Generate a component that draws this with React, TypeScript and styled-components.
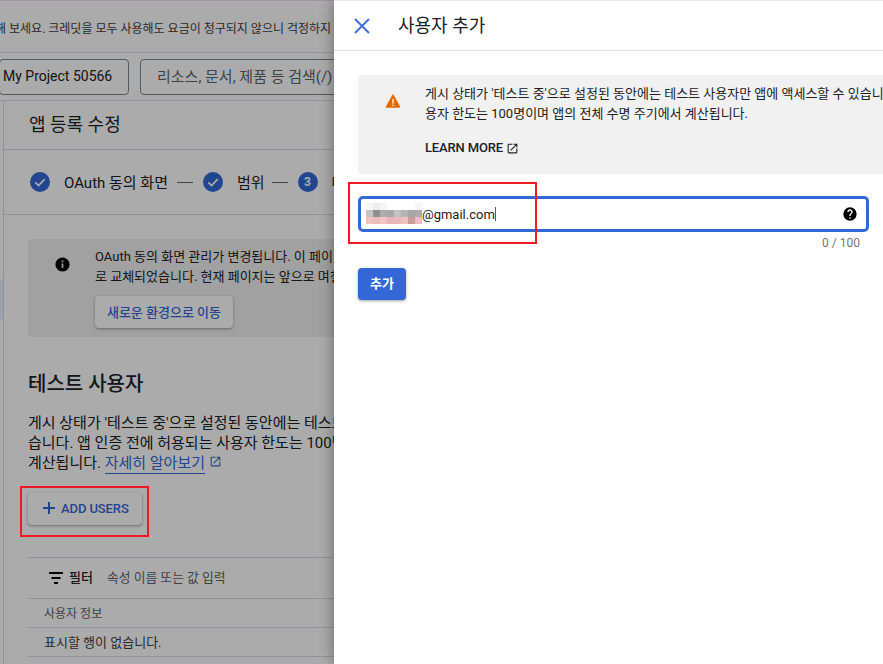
import React from "react";
import styled, { createGlobalStyle } from "styled-components";

const Global = createGlobalStyle`
  html, body { margin: 0; padding: 0; background: #fff; }
  * { box-sizing: border-box; }
  body { font-family: Roboto, "Noto Sans CJK KR", sans-serif; color: #202124; }
`;

const Screen = styled.div`
  position: relative;
  width: 883px;
  height: 664px;
  overflow: hidden;
  background: #fff;
`;

const Console = styled.div`
  width: 883px;
  height: 664px;
  padding-top: 2px;
  border-top: 1px solid #efe3f0;
  display: flex;
  flex-direction: column;
`;

const Banner = styled.div`
  height: 50px;
  flex: none;
  border-bottom: 1px solid #dadce0;
  display: flex;
  align-items: center;
  overflow: hidden;
`;

const BannerText = styled.span`
  margin-left: -5px;
  padding-bottom: 1px;
  font-size: 12px;
  white-space: nowrap;
  color: #3c4043;
`;

const TopBar = styled.div`
  height: 48px;
  flex: none;
  border-bottom: 1px solid #dadce0;
  display: flex;
  align-items: center;
  gap: 11px;
`;

const ProjectChip = styled.div`
  width: 130px;
  height: 36px;
  flex: none;
  margin-left: -1px;
  padding: 0 0 2px 3px;
  border: 1px solid #80868b;
  border-radius: 4px;
  display: flex;
  align-items: center;
  font-size: 14px;
  white-space: nowrap;
`;

const SearchChip = styled.div`
  width: 400px;
  height: 36px;
  flex: none;
  padding: 0 0 2px 16px;
  border: 1px solid #80868b;
  border-radius: 4px;
  display: flex;
  align-items: center;
  font-size: 15px;
  white-space: nowrap;
  color: #5f6368;
`;

const Body = styled.div`
  flex: 1;
  display: flex;
  min-height: 0;
`;

const Nav = styled.div`
  width: 4px;
  flex: none;
  border-right: 1px solid #dadce0;
  padding-top: 178px;
`;

const NavActive = styled.div`
  width: 3px;
  height: 40px;
  background: #e8f0fe;
`;

const Main = styled.main`
  flex: 1;
  min-width: 0;
  display: flex;
  flex-direction: column;
`;

const TitleRow = styled.div`
  height: 49px;
  flex: none;
  border-bottom: 1px solid #dadce0;
  display: flex;
  align-items: center;
  padding: 0 0 4px 25px;
  font-size: 18px;
  font-weight: 400;
`;

const Stepper = styled.div`
  height: 65px;
  flex: none;
  border-bottom: 1px solid #dadce0;
  display: flex;
  align-items: center;
  padding-left: 26px;
  font-size: 15px;
  white-space: nowrap;
`;

const StepDot = styled.span`
  width: 20px;
  height: 20px;
  flex: none;
  border-radius: 50%;
  background: #3367d6;
  color: #fff;
  display: flex;
  align-items: center;
  justify-content: center;
  font-size: 12px;
  font-weight: 700;
`;

const StepLabel = styled.span`
  margin-left: 14px;
  padding-bottom: 2px;
`;

const StepDash = styled.span<{ $l: number; $r: number }>`
  width: 16px;
  height: 1px;
  flex: none;
  background: #5f6368;
  margin: 0 ${(p) => p.$r}px 0 ${(p) => p.$l}px;
`;

const Content = styled.div`
  padding: 24px 0 0 24px;
  display: flex;
  flex-direction: column;
  align-items: flex-start;
`;

const InfoBox = styled.div`
  width: 400px;
  height: 98px;
  flex: none;
  background: #f1f1f1;
  border-radius: 4px;
  display: flex;
  padding: 8px 0 0 26px;
`;

const InfoIcon = styled.svg`
  width: 17px;
  height: 17px;
  flex: none;
  margin-top: 9px;
  color: #000;
`;

const InfoBody = styled.div`
  margin-left: 24px;
  display: flex;
  flex-direction: column;
  align-items: flex-start;
  font-size: 13px;
  line-height: 20px;
  white-space: nowrap;
`;

const RaisedButton = styled.button`
  border: 0;
  background: #fff;
  border-radius: 4px;
  color: #3367d6;
  font-family: inherit;
  font-size: 13px;
  font-weight: 500;
  height: 32px;
  display: flex;
  align-items: center;
  box-shadow: 0 1px 2px rgba(60, 64, 67, 0.3), 0 1px 3px 1px rgba(60, 64, 67, 0.15);
`;

const MoveButton = styled(RaisedButton)`
  width: 138px;
  justify-content: center;
  margin-top: 9px;
  padding-bottom: 2px;
`;

const Heading = styled.h2`
  margin: 33px 0 0;
  font-size: 20px;
  line-height: 28px;
  font-weight: 500;
`;

const Paragraph = styled.p`
  margin: 15px 0 0;
  font-size: 15px;
  line-height: 20px;
  white-space: nowrap;
`;

const DocLink = styled.a`
  color: #3367d6;
  border-bottom: 1px solid #3367d6;
  padding-bottom: 1px;
`;

const AddButton = styled(RaisedButton)`
  width: 114px;
  margin-top: 20px;
  padding: 0 0 2px 14px;
  gap: 5px;
  font-size: 13px;
  letter-spacing: -0.1px;
`;

const Table = styled.div`
  width: 400px;
  margin-top: 32px;
  border-top: 1px solid #dadce0;
`;

const FilterRow = styled.div`
  height: 41px;
  border-bottom: 1px solid #dadce0;
  display: flex;
  align-items: center;
  padding: 0 0 0 21px;
  font-size: 13px;
`;

const FilterLabel = styled.span`
  margin-left: 6px;
  padding-bottom: 3px;
  font-weight: 500;
`;

const FilterHint = styled.span`
  margin-left: 14px;
  padding-bottom: 3px;
  font-size: 12.8px;
  color: #5f6368;
`;

const TableRow = styled.div<{ $head?: boolean }>`
  height: 29px;
  border-bottom: 1px solid #dadce0;
  display: flex;
  align-items: center;
  padding: 0 0 2px 16px;
  font-size: ${(p) => (p.$head ? 12 : 13)}px;
  color: ${(p) => (p.$head ? "#5f6368" : "#3c4043")};
`;

const Scrim = styled.div`
  position: absolute;
  inset: 0 0 0 0;
  background: rgba(0, 0, 0, 0.33);
`;

const Panel = styled.aside`
  position: absolute;
  top: 0;
  right: 0;
  bottom: 0;
  width: 549px;
  background: #fff;
  border-top: 1px solid #efe3f0;
  box-shadow: 0 0 14px rgba(0, 0, 0, 0.4);
  display: flex;
  flex-direction: column;
`;

const PanelHeader = styled.header`
  height: 50px;
  flex: none;
  border-bottom: 1px solid #e0e0e0;
  display: flex;
  align-items: center;
  padding-left: 18px;
`;

const CloseIcon = styled.svg`
  width: 20px;
  height: 20px;
  flex: none;
  color: #3f6fd8;
`;

const PanelTitle = styled.h1`
  margin: 0 0 4px 26px;
  font-size: 18px;
  font-weight: 400;
`;

const PanelBody = styled.div`
  padding: 24px 0 0 24px;
  display: flex;
  flex-direction: column;
  align-items: flex-start;
`;

const Notice = styled.div`
  width: 560px;
  height: 99px;
  background: #f1f1f1;
  border-radius: 4px;
  display: flex;
  padding: 9px 0 0 27px;
`;

const WarnIcon = styled.svg`
  width: 16px;
  height: 16px;
  flex: none;
  margin-top: 9px;
`;

const NoticeBody = styled.div`
  margin-left: 24px;
  font-size: 13px;
  line-height: 20px;
  white-space: nowrap;
`;

const LearnMore = styled.div`
  margin-top: 14px;
  display: flex;
  align-items: center;
  gap: 3px;
  font-size: 13px;
  font-weight: 500;
  letter-spacing: -0.15px;
`;

const Field = styled.div`
  position: relative;
  width: 511px;
  height: 36px;
  margin-top: 22px;
  border: 3px solid #3367d6;
  border-radius: 5px;
  display: flex;
  align-items: center;
  padding-left: 61px;
  font-size: 13px;
`;

const Mosaic = styled.svg`
  position: absolute;
  left: 5px;
  top: 4px;
  width: 56px;
  height: 21px;
`;

const Caret = styled.span`
  width: 1px;
  height: 14px;
  background: #2f5bb7;
`;

const HelpIcon = styled.svg`
  margin-left: auto;
  margin-right: 8px;
  width: 16px;
  height: 16px;
  flex: none;
`;

const Counter = styled.div`
  width: 502px;
  margin-top: 3px;
  text-align: right;
  font-size: 12px;
  line-height: 16px;
  color: #70757a;
`;

const SubmitButton = styled.button`
  width: 48px;
  height: 32px;
  margin-top: 17px;
  padding: 0 0 3px;
  border: 0;
  border-radius: 4px;
  background: #3367d6;
  color: #fff;
  font-family: inherit;
  font-size: 13px;
  font-weight: 700;
  box-shadow: 0 1px 2px rgba(60, 64, 67, 0.3), 0 1px 3px 1px rgba(60, 64, 67, 0.15);
`;

const Annotation = styled.div<{ $x: number; $y: number; $w: number; $h: number }>`
  position: absolute;
  left: ${(p) => p.$x}px;
  top: ${(p) => p.$y}px;
  width: ${(p) => p.$w}px;
  height: ${(p) => p.$h}px;
  border: 2px solid #ed1c24;
  pointer-events: none;
`;

const Check = () => (
  <svg width="14" height="14" viewBox="0 0 24 24" fill="none" stroke="#fff" strokeWidth="3">
    <path d="M4 12.5l5.5 5.5L20 7" />
  </svg>
);

const External = ({ color, size }: { color: string; size: number }) => (
  <svg width={size} height={size} viewBox="0 0 24 24" fill={color}>
    <path d="M19 19H5V5h7V3H5a2 2 0 0 0-2 2v14a2 2 0 0 0 2 2h14a2 2 0 0 0 2-2v-7h-2v7zM14 3v2h3.59l-9.83 9.83 1.41 1.41L19 6.41V10h2V3h-7z" />
  </svg>
);

const mosaic: [number, number, string][] = [
  [0, 0, "#f7f7f7"], [1, 0, "#ededed"], [2, 0, "#f4f4f4"], [7, 0, "#f6f6f6"],
  [0, 1, "#c4c4c4"], [1, 1, "#8f8f8f"], [2, 1, "#adadad"], [3, 1, "#a8a8a8"], [4, 1, "#c2c2c2"], [5, 1, "#b4b4b4"], [6, 1, "#a6a6a6"], [7, 1, "#aaaaaa"],
  [0, 2, "#f0c2c2"], [1, 2, "#efbcbc"], [2, 2, "#f2c4c4"], [3, 2, "#e9b6b8"], [4, 2, "#eab8ba"], [5, 2, "#efc0c0"], [6, 2, "#c99a98"], [7, 2, "#eebdbd"],
];

export default function App() {
  return (
    <Screen>
      <Global />
      <Console>
        <Banner>
          <BannerText>해 보세요. 크레딧을 모두 사용해도 요금이 청구되지 않으니 걱정하지 마세요.</BannerText>
        </Banner>
        <TopBar>
          <ProjectChip>My Project 50566</ProjectChip>
          <SearchChip>리소스, 문서, 제품 등 검색(/)</SearchChip>
        </TopBar>
        <Body>
          <Nav><NavActive /></Nav>
          <Main>
            <TitleRow>앱 등록 수정</TitleRow>
            <Stepper>
              <StepDot><Check /></StepDot>
              <StepLabel>OAuth 동의 화면</StepLabel>
              <StepDash $l={9} $r={10} />
              <StepDot><Check /></StepDot>
              <StepLabel>범위</StepLabel>
              <StepDash $l={7} $r={10} />
              <StepDot>3</StepDot>
              <StepLabel>테스트 사용자</StepLabel>
            </Stepper>
            <Content>
              <InfoBox>
                <InfoIcon viewBox="0 0 24 24" fill="currentColor">
                  <path d="M12 2a10 10 0 1 0 0 20 10 10 0 0 0 0-20zm1.2 15h-2.4v-6.5h2.4V17zm0-8.2h-2.4V6.5h2.4v2.3z" />
                </InfoIcon>
                <InfoBody>
                  <span>OAuth 동의 화면 관리가 변경됩니다. 이 페이지는</span>
                  <span>로 교체되었습니다. 현재 페이지는 앞으로 며칠</span>
                  <MoveButton>새로운 환경으로 이동</MoveButton>
                </InfoBody>
              </InfoBox>
              <Heading>테스트 사용자</Heading>
              <Paragraph>
                게시 상태가 '테스트 중'으로 설정된 동안에는 테스트 사용자만
                <br />
                습니다. 앱 인증 전에 허용되는 사용자 한도는 100명이며
                <br />
                계산됩니다. <DocLink>자세히 알아보기</DocLink>{" "}
                <External color="#3367d6" size={13} />
              </Paragraph>
              <AddButton>
                <svg width="14" height="14" viewBox="0 0 14 14" fill="#3367d6">
                  <path d="M6 1h2v5h5v2H8v5H6V8H1V6h5z" />
                </svg>
                ADD USERS
              </AddButton>
              <Table>
                <FilterRow>
                  <svg width="14" height="12" viewBox="0 0 14 12" fill="#000">
                    <path d="M0 0h14v2H0zM2.5 5h9v2h-9zM5 10h4v2H5z" />
                  </svg>
                  <FilterLabel>필터</FilterLabel>
                  <FilterHint>속성 이름 또는 값 입력</FilterHint>
                </FilterRow>
                <TableRow $head>사용자 정보</TableRow>
                <TableRow>표시할 행이 없습니다.</TableRow>
              </Table>
            </Content>
          </Main>
        </Body>
      </Console>
      <Scrim />
      <Panel>
        <PanelHeader>
          <CloseIcon viewBox="0 0 20 20" fill="none" stroke="currentColor" strokeWidth="2">
            <path d="M3 3l14 14M17 3L3 17" />
          </CloseIcon>
          <PanelTitle>사용자 추가</PanelTitle>
        </PanelHeader>
        <PanelBody>
          <Notice>
            <WarnIcon viewBox="0 0 24 24">
              <path fill="#e06c00" stroke="#e06c00" strokeWidth="2" strokeLinejoin="round" d="M2 21L12 3l10 18H2z" />
              <path fill="#fff" d="M11 9h2v7h-2zM11 17.5h2v2h-2z" />
            </WarnIcon>
            <NoticeBody>
              게시 상태가 '테스트 중'으로 설정된 동안에는 테스트 사용자만 앱에 액세스할 수 있습니다. 사
              <br />
              용자 한도는 100명이며 앱의 전체 수명 주기에서 계산됩니다.
              <LearnMore>
                LEARN MORE <External color="#202124" size={13} />
              </LearnMore>
            </NoticeBody>
          </Notice>
          <Field>
            <Mosaic viewBox="0 0 56 21">
              {mosaic.map(([c, r, f]) => (
                <rect key={`${c}-${r}`} x={c * 7} y={r * 7} width="7.05" height="7.05" fill={f} />
              ))}
            </Mosaic>
            @gmail.com
            <Caret />
            <HelpIcon viewBox="0 0 24 24" fill="#000">
              <path d="M12 2a10 10 0 1 0 0 20 10 10 0 0 0 0-20zm1 17h-2v-2h2v2zm2.07-7.75l-.9.92C13.45 12.9 13 13.5 13 15h-2v-.5c0-1.1.45-2.1 1.17-2.83l1.24-1.26c.37-.36.59-.86.59-1.41 0-1.1-.9-2-2-2s-2 .9-2 2H8c0-2.21 1.79-4 4-4s4 1.79 4 4c0 .88-.36 1.68-.93 2.25z" />
            </HelpIcon>
          </Field>
          <Counter>0 / 100</Counter>
          <SubmitButton>추가</SubmitButton>
        </PanelBody>
      </Panel>
      <Annotation $x={348} $y={182} $w={189} $h={62} />
      <Annotation $x={20} $y={486} $w={129} $h={51} />
    </Screen>
  );
}
